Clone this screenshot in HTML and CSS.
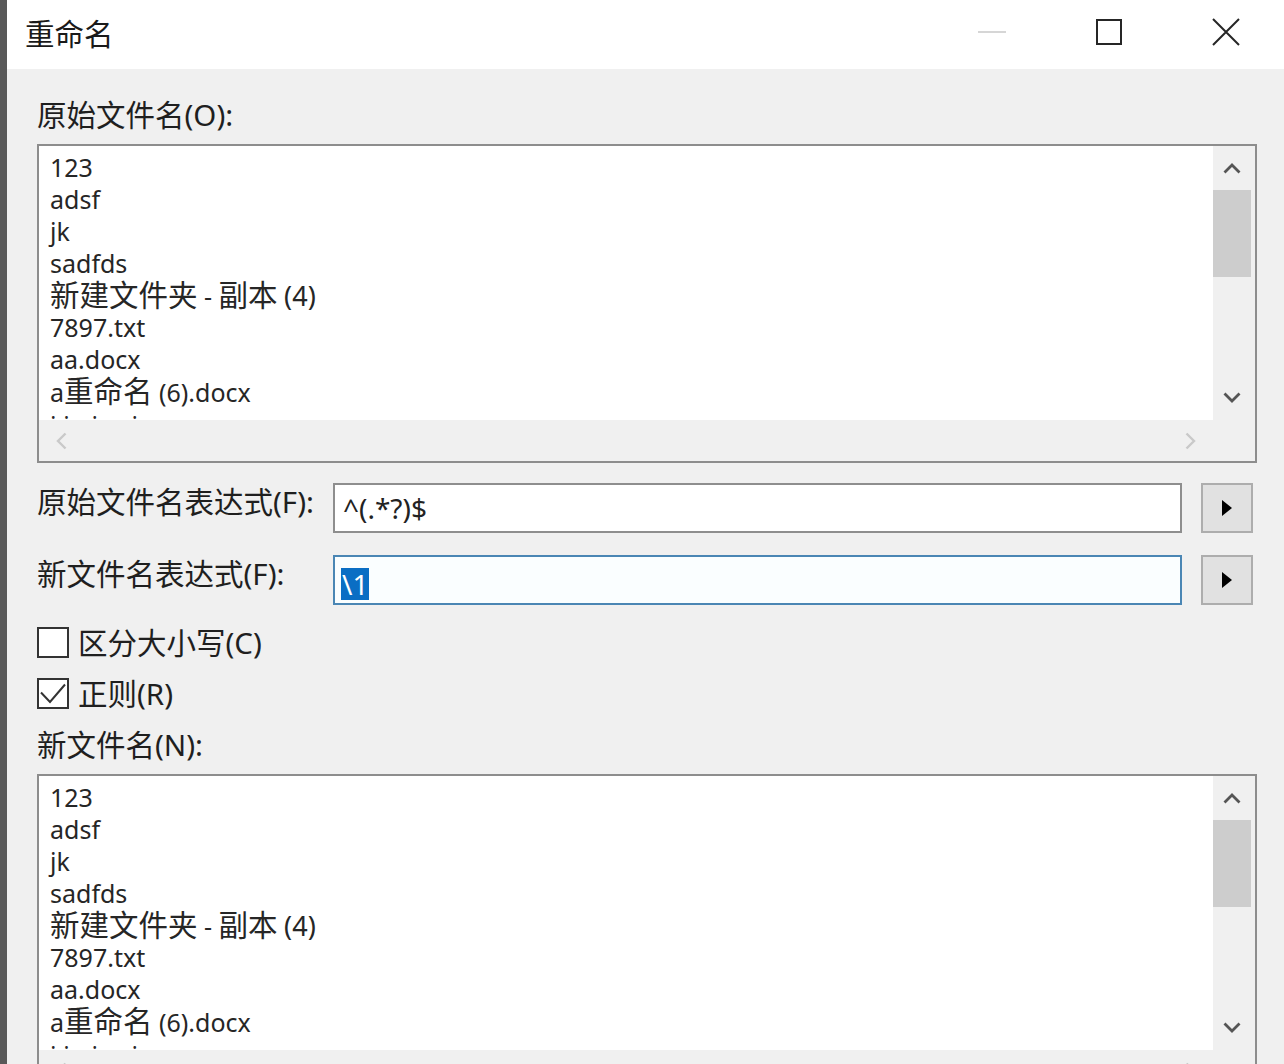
FILE: index.html
```html
<!DOCTYPE html>
<html lang="zh-CN">
<head>
    <meta charset="UTF-8">
    <meta name="viewport" content="width=device-width, initial-scale=1.0">
    <title>重命名</title>
    <link rel="stylesheet" href="styles.css">
</head>
<body>
    <div class="window">
        <header class="titlebar">
            <h1 class="title">重命名</h1>
            <div class="controls">
                <span class="ctl">
                    <svg width="28" height="4" viewBox="0 0 28 4"><line x1="0" y1="2" x2="28" y2="2" stroke="#d6d6d6" stroke-width="2"/></svg>
                </span>
                <span class="ctl">
                    <svg width="26" height="26" viewBox="0 0 26 26"><rect x="1" y="1" width="24" height="24" fill="none" stroke="#262626" stroke-width="2"/></svg>
                </span>
                <span class="ctl">
                    <svg width="28" height="28" viewBox="0 0 28 28"><path d="M1 1 L27 27 M27 1 L1 27" stroke="#262626" stroke-width="2" fill="none"/></svg>
                </span>
            </div>
        </header>

        <main class="content">
            <div class="caption">原始文件名(O):</div>
            <div class="listbox">
                <ul class="items">
                    <li>123</li>
                    <li>adsf</li>
                    <li>jk</li>
                    <li>sadfds</li>
                    <li><span class="zh">新建文件夹</span> - <span class="zh">副本</span> <span class="paren">(4)</span></li>
                    <li>7897.txt</li>
                    <li>aa.docx</li>
                    <li>a<span class="zh">重命名</span> (6).docx</li>
                    <li>i.i ni.avi</li>
                </ul>
                <div class="vscroll">
                    <span class="sb-btn"><svg width="18" height="11" viewBox="0 0 18 11"><polyline points="1.5,9.5 9,2 16.5,9.5" fill="none" stroke="#555" stroke-width="2.8"/></svg></span>
                    <span class="thumb"></span>
                    <span class="track"></span>
                    <span class="sb-btn sb-down"><svg width="18" height="11" viewBox="0 0 18 11"><polyline points="1.5,1.5 9,9 16.5,1.5" fill="none" stroke="#555" stroke-width="2.8"/></svg></span>
                </div>
                <div class="hscroll">
                    <span class="sb-btn sb-left"><svg width="11" height="18" viewBox="0 0 11 18"><polyline points="9.5,1.5 2,9 9.5,16.5" fill="none" stroke="#c9c9c9" stroke-width="2.4"/></svg></span>
                    <span class="track"></span>
                    <span class="sb-btn sb-right"><svg width="11" height="18" viewBox="0 0 11 18"><polyline points="1.5,1.5 9,9 1.5,16.5" fill="none" stroke="#c9c9c9" stroke-width="2.4"/></svg></span>
                </div>
                <div class="corner"></div>
            </div>

            <div class="expr-row">
                <div class="expr-label">原始文件名表达式(F):</div>
                <div class="expr-input">^(.*?)$</div>
                <span class="arrow-btn"><svg width="12" height="18" viewBox="0 0 12 18"><polygon points="1,1 11,9 1,17" fill="#000"/></svg></span>
            </div>
            <div class="expr-row">
                <div class="expr-label">新文件名表达式(F):</div>
                <div class="expr-input focused"><span class="sel">\1</span></div>
                <span class="arrow-btn"><svg width="12" height="18" viewBox="0 0 12 18"><polygon points="1,1 11,9 1,17" fill="#000"/></svg></span>
            </div>

            <div class="check">
                <span class="box"></span>
                <span>区分大小写(C)</span>
            </div>
            <div class="check">
                <span class="box">
                    <svg width="28" height="27" viewBox="0 0 28 27"><polyline points="2,12.5 11,22 26,4.5" fill="none" stroke="#333" stroke-width="2"/></svg>
                </span>
                <span>正则(R)</span>
            </div>

            <div class="caption caption-new">新文件名(N):</div>
            <div class="listbox">
                <ul class="items">
                    <li>123</li>
                    <li>adsf</li>
                    <li>jk</li>
                    <li>sadfds</li>
                    <li><span class="zh">新建文件夹</span> - <span class="zh">副本</span> <span class="paren">(4)</span></li>
                    <li>7897.txt</li>
                    <li>aa.docx</li>
                    <li>a<span class="zh">重命名</span> (6).docx</li>
                    <li>i.i ni.avi</li>
                </ul>
                <div class="vscroll">
                    <span class="sb-btn"><svg width="18" height="11" viewBox="0 0 18 11"><polyline points="1.5,9.5 9,2 16.5,9.5" fill="none" stroke="#555" stroke-width="2.8"/></svg></span>
                    <span class="thumb"></span>
                    <span class="track"></span>
                    <span class="sb-btn sb-down"><svg width="18" height="11" viewBox="0 0 18 11"><polyline points="1.5,1.5 9,9 16.5,1.5" fill="none" stroke="#555" stroke-width="2.8"/></svg></span>
                </div>
                <div class="hscroll">
                    <span class="sb-btn sb-left"><svg width="11" height="18" viewBox="0 0 11 18"><polyline points="9.5,1.5 2,9 9.5,16.5" fill="none" stroke="#c9c9c9" stroke-width="2.4"/></svg></span>
                    <span class="track"></span>
                    <span class="sb-btn sb-right"><svg width="11" height="18" viewBox="0 0 11 18"><polyline points="1.5,1.5 9,9 1.5,16.5" fill="none" stroke="#c9c9c9" stroke-width="2.4"/></svg></span>
                </div>
                <div class="corner"></div>
            </div>
        </main>
    </div>
</body>
</html>
```

FILE: styles.css
```css
* {
    box-sizing: border-box;
}

html, body {
    height: 100%;
}

body {
    margin: 0;
    display: flex;
    background-color: #595959;
    font-family: "Noto Sans", "Noto Sans CJK SC", sans-serif;
    color: #1f1f1f;
    overflow: hidden;
}

.window {
    flex: 1;
    margin-left: 7px;
    background-color: #f0f0f0;
}

/* title bar */

.titlebar {
    height: 69px;
    background-color: #fff;
    display: flex;
    align-items: center;
    padding-bottom: 4px;
}

.title {
    flex: 1;
    margin: 0 0 0 18px;
    font-size: 29.5px;
    font-weight: normal;
    color: #1a1a1a;
}

.controls {
    display: flex;
    align-self: stretch;
    padding-bottom: 1px;
}

.ctl {
    width: 117px;
    display: flex;
    align-items: center;
    justify-content: center;
}

/* dialog body */

.content {
    padding: 26px 27px 0 30px;
}

.caption {
    font-size: 29.5px;
    line-height: 40px;
    margin-bottom: 9px;
}

.caption-new {
    margin-top: 16px;
}

.listbox {
    height: 319px;
    border: 2px solid #8d8d8d;
    background-color: #f0f0f0;
    display: grid;
    grid-template-columns: 1fr 42px;
    grid-template-rows: 274px 41px;
}

.items {
    margin: 0;
    padding: 5px 0 0 11px;
    list-style: none;
    background-color: #fff;
    overflow: hidden;
    font-size: 25px;
    color: #262626;
}

.items li {
    height: 32px;
    line-height: 32px;
    white-space: nowrap;
}

.items li:last-child {
    padding-top: 2px;
}

.zh {
    font-size: 29.5px;
}

.paren {
    font-size: 27px;
}

.vscroll {
    display: flex;
    flex-direction: column;
    padding-right: 4px;
}

.sb-btn {
    height: 44px;
    display: flex;
    align-items: center;
    justify-content: center;
}

.sb-down {
    height: 45px;
}

.thumb {
    height: 87px;
    background-color: #cdcdcd;
}

.track {
    flex: 1;
}

.hscroll {
    display: flex;
}

.hscroll .sb-btn {
    height: auto;
}

.sb-left {
    width: 44px;
}

.sb-right {
    width: 46px;
}

/* expression rows */

.expr-row {
    display: flex;
    align-items: flex-start;
    margin-top: 20px;
    padding-right: 4px;
}

.expr-row + .expr-row {
    margin-top: 22px;
}

.expr-label {
    width: 296px;
    flex-shrink: 0;
    font-size: 29.5px;
    line-height: 38px;
}

.expr-input {
    flex: 1;
    height: 50px;
    border: 2px solid #8e8e8e;
    background-color: #fff;
    padding-left: 8px;
    font-size: 28px;
    line-height: 46px;
    color: #222;
}

.expr-input.focused {
    border-color: #4a86b4;
    background-color: #fafeff;
    padding-left: 6px;
}

.sel {
    display: inline-block;
    vertical-align: middle;
    line-height: 32px;
    padding: 0 1px;
    background-color: #0a6ec4;
    color: #fff;
}

.arrow-btn {
    width: 52px;
    height: 50px;
    margin-left: 19px;
    background-color: #e1e1e1;
    border: 2px solid #adadad;
    display: flex;
    align-items: center;
    justify-content: center;
}

/* checkboxes */

.check {
    display: flex;
    align-items: center;
    gap: 9px;
    margin-top: 22px;
    font-size: 29.5px;
    line-height: 31px;
}

.check + .check {
    margin-top: 20px;
}

.box {
    width: 32px;
    height: 31px;
    border: 2px solid #333;
    background-color: #fff;
    display: flex;
}
```
